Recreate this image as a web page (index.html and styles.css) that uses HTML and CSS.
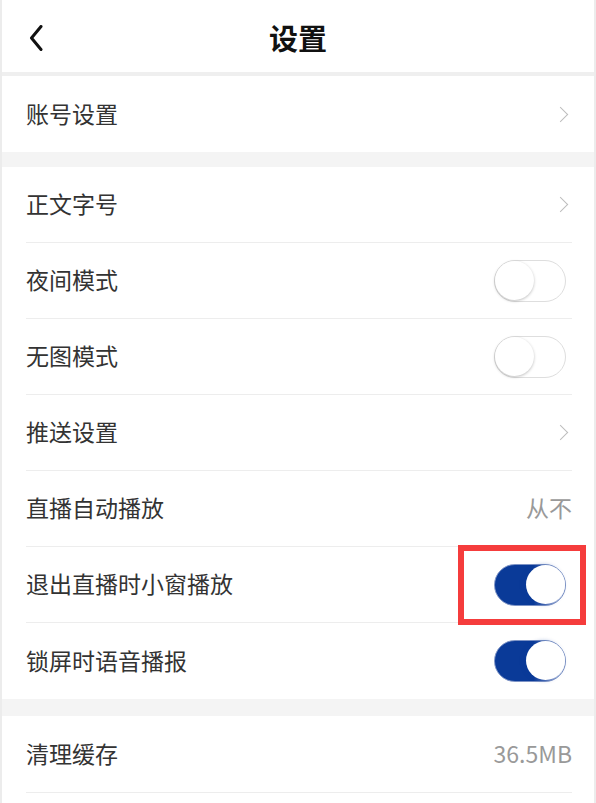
FILE: index.html
```html
<!DOCTYPE html>
<html lang="zh-CN">

<head>
    <meta charset="UTF-8">
    <meta name="viewport" content="width=device-width, initial-scale=1.0">
    <title>设置</title>
    <link rel="stylesheet" href="styles.css">
</head>

<body>
    <div class="page">
        <!-- 顶部标题栏 -->
        <div class="header">
            <div class="back">
                <svg width="14" height="26" viewBox="0 0 14 26">
                    <path d="M12 1.5 L2.5 13 L12 24.5" fill="none" stroke="#111" stroke-width="3" stroke-linecap="round" stroke-linejoin="round" />
                </svg>
            </div>
            <div class="title">设置</div>
            <div></div>
        </div>
        <div class="gap gap-thin"></div>

        <div class="group">
            <div class="row">
                <span class="label">账号设置</span>
                <span class="arrow"></span>
            </div>
        </div>
        <div class="gap"></div>

        <div class="group">
            <div class="row line">
                <span class="label">正文字号</span>
                <span class="arrow"></span>
            </div>
            <div class="row line">
                <span class="label">夜间模式</span>
                <span class="switch"></span>
            </div>
            <div class="row line">
                <span class="label">无图模式</span>
                <span class="switch"></span>
            </div>
            <div class="row line">
                <span class="label">推送设置</span>
                <span class="arrow"></span>
            </div>
            <div class="row line">
                <span class="label">直播自动播放</span>
                <span class="value">从不</span>
            </div>
            <div class="row line">
                <span class="label">退出直播时小窗播放</span>
                <span class="switch on"></span>
                <span class="mark"></span>
            </div>
            <div class="row">
                <span class="label">锁屏时语音播报</span>
                <span class="switch on"></span>
            </div>
        </div>
        <div class="gap gap-last"></div>

        <div class="group">
            <div class="row line row-last">
                <span class="label">清理缓存</span>
                <span class="value">36.5MB</span>
            </div>
        </div>
    </div>
</body>

</html>
```

FILE: styles.css
```css
* {
    box-sizing: border-box;
    padding: 0;
    margin: 0;
}

body {
    background: #ececec;
    font-family: "Noto Sans CJK SC", "Noto Sans", sans-serif;
}

.page {
    width: 592px;
    height: 803px;
    margin: 0 2px;
    background: #fff;
    overflow: hidden;
}

/* 标题栏 */

.header {
    height: 72px;
    display: grid;
    grid-template-columns: 100px 1fr 100px;
    align-items: center;
}

.back {
    padding-left: 27px;
    padding-top: 4px;
    display: flex;
}

.title {
    text-align: center;
    font-size: 29px;
    font-weight: 700;
    color: #111;
    padding-top: 2px;
}

.gap {
    height: 15px;
    background: #f4f4f4;
}

.gap-thin {
    height: 4px;
    background: #efefef;
}

.gap-last {
    height: 17px;
}

/* 列表 */

.row {
    height: 76px;
    margin: 0 22px 0 24px;
    display: flex;
    align-items: center;
    justify-content: space-between;
    position: relative;
}

.row.line {
    border-bottom: 1px solid #ededed;
}

.row-last {
    height: 77px;
}

.label {
    font-size: 23px;
    color: #333;
    margin-top: -3px;
}

.value {
    font-size: 23px;
    color: #999;
    margin-top: -3px;
}

.arrow {
    width: 11px;
    height: 11px;
    border-top: 1.5px solid #bdbdbd;
    border-right: 1.5px solid #bdbdbd;
    transform: rotate(45deg);
    margin-right: 6px;
}

/* 开关 */

.switch {
    width: 72px;
    height: 42px;
    margin-right: 6px;
    border-radius: 21px;
    border: 1.5px solid #dedede;
    background: #fff;
    position: relative;
}

.switch:after {
    content: '';
    position: absolute;
    top: 0;
    left: 0;
    width: 39px;
    height: 39px;
    border-radius: 50%;
    background: #fff;
    box-shadow: 0 1px 3px rgba(0, 0, 0, 0.25);
}

.switch.on {
    border-color: #7d93c5;
    background: linear-gradient(to right, #0a3a98 0%, #0a3a98 55%, #5b79bd 75%, #fff 100%);
}

.switch.on:after {
    left: auto;
    right: 0;
    box-shadow: -2px 0 4px rgba(10, 58, 152, 0.4);
}

/* 红色标注框 */

.mark {
    position: absolute;
    right: -14px;
    top: -2px;
    width: 128px;
    height: 80px;
    border: 6px solid #f53c3c;
}
```
